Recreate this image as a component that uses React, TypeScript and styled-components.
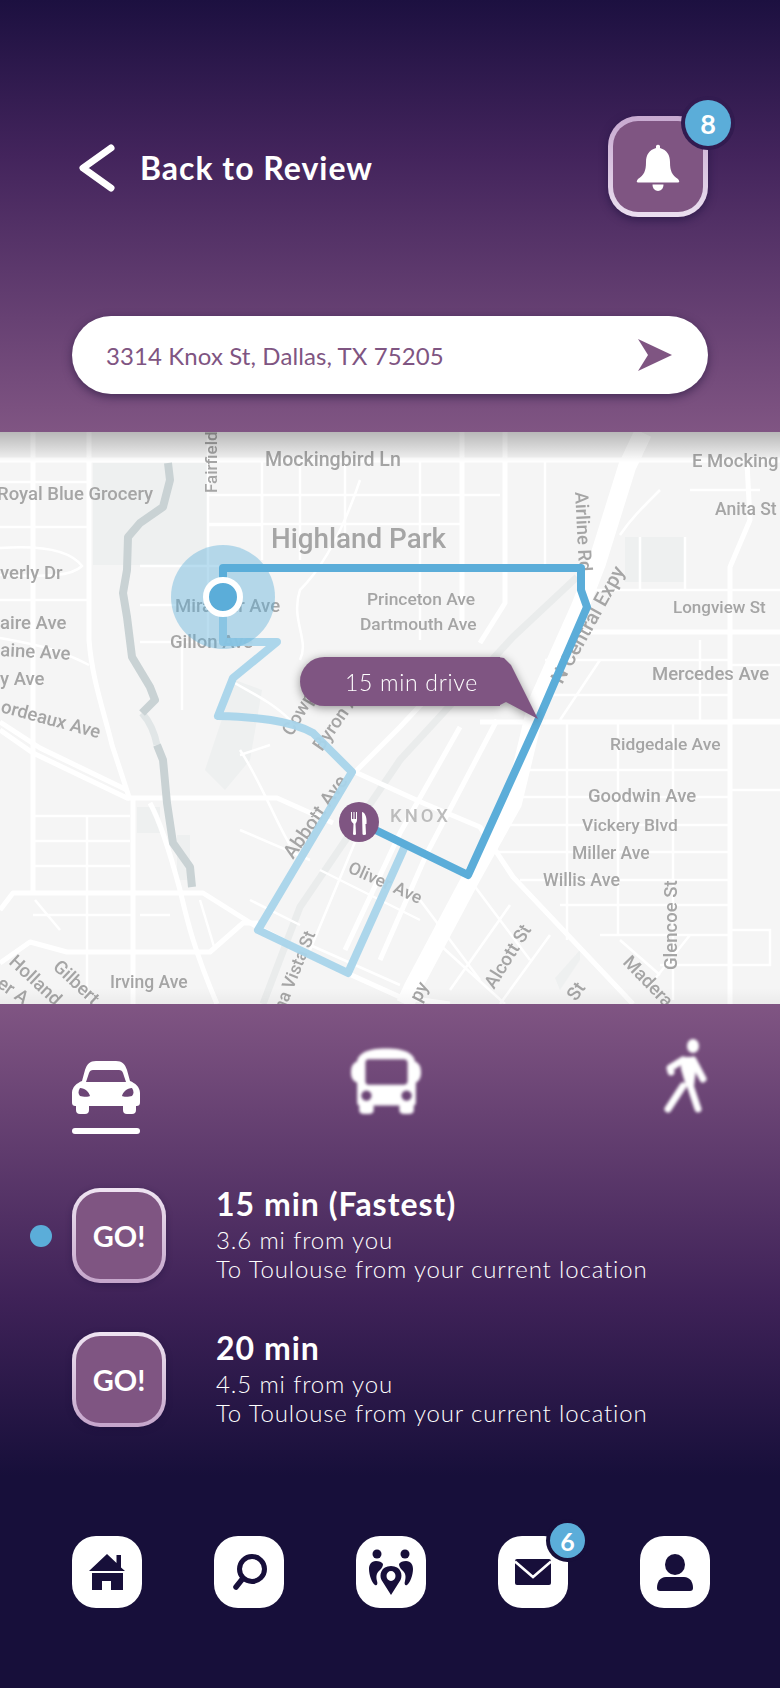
import styled, { createGlobalStyle } from 'styled-components'

const GlobalStyle = createGlobalStyle`
  html, body {
    margin: 0;
    padding: 0;
    background: #170f3a;
  }
  * {
    box-sizing: border-box;
  }
`

const Screen = styled.div`
  width: 780px;
  height: 1688px;
  display: flex;
  flex-direction: column;
  font-family: Lato, 'Open Sans', sans-serif;
  color: #fff;
  overflow: hidden;
`

const Header = styled.header`
  height: 432px;
  padding: 116px 72px 0;
  background: linear-gradient(#1c1040 0%, #43245c 36%, #805583 100%);
`

const TopRow = styled.div`
  display: flex;
  align-items: center;
  justify-content: space-between;
  height: 101px;
`

const BackLink = styled.a`
  display: flex;
  align-items: center;
  gap: 24px;
  padding-left: 6px;
  margin-top: 2px;
  font-size: 32px;
  font-weight: 700;
  letter-spacing: 1px;
`

const BellButton = styled.button`
  position: relative;
  width: 100px;
  height: 101px;
  display: flex;
  align-items: center;
  justify-content: center;
  border: 5px solid transparent;
  border-radius: 30px;
  background: linear-gradient(#7f5582, #7f5582) padding-box,
    linear-gradient(#c7a9d0, #ebdff0) border-box;
  box-shadow: 0 3px 8px rgba(23, 15, 58, 0.55);
`

const Badge = styled.span<{ $size: number; $ring: string; $font: number }>`
  position: absolute;
  width: ${(p) => p.$size}px;
  height: ${(p) => p.$size}px;
  display: flex;
  align-items: center;
  justify-content: center;
  border-radius: 50%;
  background: #5badd9;
  box-shadow: 0 0 0 4px ${(p) => p.$ring};
  color: #fff;
  font-family: Lato, sans-serif;
  font-size: ${(p) => p.$font}px;
  font-weight: 700;
`

const BellBadge = styled(Badge)`
  top: -21px;
  right: -28px;
`

const NavBadge = styled(Badge)`
  top: -13px;
  right: -17px;
`

const SearchBar = styled.div`
  margin-top: 99px;
  height: 78px;
  display: flex;
  align-items: center;
  justify-content: space-between;
  padding: 0 36px 0 34px;
  border-radius: 39px;
  background: #fff;
  color: #7f5582;
  font-size: 24px;
  letter-spacing: 0.1px;
  box-shadow: 0 3px 10px rgba(35, 20, 60, 0.6);
`

const MapFrame = styled.section`
  position: relative;
  height: 572px;
  background: #f5f5f5;
  overflow: hidden;

  &::after {
    content: '';
    position: absolute;
    inset: 0;
    pointer-events: none;
    background: linear-gradient(rgba(0, 0, 0, 0.25), rgba(0, 0, 0, 0) 30px),
      linear-gradient(0deg, rgba(0, 0, 0, 0.04), rgba(0, 0, 0, 0) 16px);
  }
`

const MapSvg = styled.svg`
  display: block;
  width: 780px;
  height: 572px;
`

const Base = styled.g`
  filter: blur(0.5px);
`

const MapLabel = styled.text<{ $size: number; $color: string; $spacing: number }>`
  font-family: Roboto, 'Liberation Sans', sans-serif;
  font-size: ${(p) => p.$size}px;
  font-weight: 500;
  fill: ${(p) => p.$color};
  letter-spacing: ${(p) => p.$spacing}px;
`

const DriveBubble = styled.div`
  position: absolute;
  left: 300px;
  top: 225px;
  width: 200px;
  height: 49px;
  z-index: 1;
  display: flex;
  align-items: center;
  padding-left: 45px;
  border-radius: 25px 0 0 25px;
  background: #7f5582;
  font-size: 23px;
  font-weight: 300;
  letter-spacing: 0.7px;
  white-space: nowrap;
  filter: drop-shadow(0 2px 5px rgba(0, 0, 0, 0.4));

  &::after {
    content: '';
    position: absolute;
    left: 198px;
    top: 0;
    width: 42px;
    height: 63px;
    background: #7f5582;
    clip-path: polygon(0 0, 6px 1px, 13px 8px, 40px 62px, 8px 45px, 0 49px);
  }
`

const Panel = styled.section`
  flex: 1;
  background: linear-gradient(#805583 0%, #3f2258 43%, #170f3a 69%);
`

const Tabs = styled.div`
  display: grid;
  grid-template-columns: 279px 312px 44px;
  padding: 36px 0 0 72px;
`

const Tab = styled.div`
  display: flex;
  flex-direction: column;
  gap: 14px;
`

const TabIcon = styled.div<{ $blurred?: boolean }>`
  height: 74px;
  display: flex;
  align-items: flex-end;
  filter: ${(p) => (p.$blurred ? 'blur(1.7px)' : 'none')};
`

const TabLine = styled.div`
  width: 68px;
  height: 6px;
  border-radius: 3px;
  background: #fff;
`

const RouteList = styled.div`
  display: flex;
  flex-direction: column;
  gap: 49px;
  margin-top: 54px;
  padding-left: 30px;
`

const Route = styled.div`
  display: grid;
  grid-template-columns: 22px 94px 1fr;
  column-gap: 20px;
  align-items: center;
  height: 95px;

  & > :nth-child(3) {
    margin-left: 30px;
  }
`

const Dot = styled.span<{ $on: boolean }>`
  width: 22px;
  height: 22px;
  border-radius: 50%;
  background: ${(p) => (p.$on ? '#5badd9' : 'transparent')};
`

const GoButton = styled.button`
  width: 94px;
  height: 95px;
  padding: 0;
  border: 4px solid transparent;
  border-radius: 28px;
  background: linear-gradient(#7f5582, #7f5582) padding-box,
    linear-gradient(#efe4f2, #c5a5cb) border-box;
  color: #fff;
  font-family: Lato, sans-serif;
  font-size: 29px;
  font-weight: 700;
  box-shadow: 0 2px 6px rgba(23, 15, 58, 0.35);
`

const RouteText = styled.div`
  align-self: start;
`

const RouteTitle = styled.div`
  font-size: 32px;
  line-height: 32px;
  font-weight: 700;
  letter-spacing: 1px;
  margin-bottom: 5px;
`

const RouteLine = styled.div`
  font-size: 24px;
  line-height: 29px;
  font-weight: 300;
  letter-spacing: 0.86px;
`

const BottomNav = styled.nav`
  display: flex;
  gap: 72px;
  margin-top: 109px;
  padding-left: 72px;
`

const NavButton = styled.button`
  position: relative;
  width: 70px;
  height: 72px;
  padding: 0;
  display: flex;
  align-items: center;
  justify-content: center;
  border: none;
  border-radius: 24px;
  background: #fff;
`

const NAVY = '#170f3a'

const ROADS_THICK = [
  'M0 460H780',
  'M89 432V640C92 680 105 715 112 745L130 800',
  'M33 432V893',
  'M0 730L33 753L127 798H277L333 823',
  'M0 722L40 748L127 790',
  'M133 798V1004',
  'M150 803C162 825 172 860 180 890C186 915 192 945 217 1004',
  'M0 910L13 893H203L257 927L347 973L400 997L450 1004',
  'M0 963L30 942L67 952H210L243 923H258',
  'M355 772L400 727L430 695L470 665',
  'M355 772L423 803L480 827L513 877L633 1004',
  'M505 432V603L480 643',
  'M462 432V625',
  'M747 463L750 520L730 567V1004',
  'M580 632H780',
  'M480 722H780',
  'M460 727L400 833L345 950',
  'M497 720L427 853L380 960',
]

const ROADS_THIN = [
  'M0 482H89M0 527H89M0 548C40 545 70 550 82 566C70 578 40 576 0 575',
  'M0 600H89M0 638C40 645 60 650 89 665',
  'M208 432V640M208 495H500M208 524H460M140 566H520',
  'M140 605H240M140 642H220M182 642V710',
  'M262 460V560M300 460V560M345 460V540M420 460V640M545 460V570',
  'M262 495V520M208 525H262M360 480C350 510 330 560 300 590C290 620 310 640 300 660',
  'M660 490C640 510 630 520 620 535M690 490H760',
  'M33 816H130M33 841H130M33 866H130M87 816V893',
  'M33 915H133M87 893V1000M140 915H170M133 952V1004',
  'M567 722V940M618 722V935M673 722V1000M700 640V722',
  'M545 660H730M550 695H730M520 770H730M510 797H730M500 825H730M490 852H730M520 880H730M560 905H730',
  'M600 935H730M660 965H730M620 940L660 975M690 935L650 985',
  'M730 665H780M730 720H780M730 790H780M730 930H770V965H730',
  'M420 900L480 980M470 880L530 960M440 945L505 1004M510 905L450 990M550 935L500 1004',
  'M590 590H780M640 537V590M685 537V590M600 660L560 720',
  'M240 750C260 780 275 820 290 845M240 830L310 860M250 900L300 925M320 870L420 920',
  'M360 830L310 950M400 860L350 975M310 945L400 985',
  'M230 680C245 690 270 700 290 720M240 755L270 745',
  'M60 930L35 900M200 900L215 950',
]

const RIVER = [
  'M168 463L170 480L163 507L140 523L128 537L127 570L123 593L127 617L132 657L150 687L155 700L142 713',
  'M157 745L163 760L167 803L173 843L190 867L192 887',
]

type LabelDef = [string, number, number, number?, number?, string?, number?]

const LABELS: LabelDef[] = [
  ['Mockingbird Ln', 265, 466, 0, 19.6],
  ['E Mocking', 692, 467],
  ['Fairfield', 217, 493, -90, 17],
  ['Royal Blue Grocery', -3, 500],
  ['Highland Park', 271, 548, 0, 27.8],
  ['Anita St', 715, 515, 0, 17.5],
  ['Airline Rd', 575, 492, 87],
  ['N Central Expy', 562, 685, -61, 20],
  ['verly Dr', 0, 579],
  ['Miramar Ave', 175, 612],
  ['Gillon Ave', 170, 648],
  ['aire Ave', 0, 629],
  ['aine Ave', 0, 656, 3],
  ['y Ave', 0, 685],
  ['ordeaux Ave', 0, 712, 15],
  ['Princeton Ave', 367, 605, 0, 17.4],
  ['Dartmouth Ave', 360, 630, 0, 17.4],
  ['Longview St', 673, 613, 0, 17],
  ['Mercedes Ave', 652, 680],
  ['Ridgedale Ave', 610, 750, 0, 17.4],
  ['Goodwin Ave', 588, 802],
  ['Vickery Blvd', 582, 831, 0, 17.4],
  ['Miller Ave', 572, 859, 0, 17.5],
  ['Willis Ave', 543, 886, 0, 17.8],
  ['KNOX', 390, 822, 0, 18.5, '#bcbcbc', 3],
  ['Glencoe St', 677, 970, -90],
  ['Alcott St', 494, 990, -58],
  ['St', 576, 1002, -55],
  ['Madera', 622, 963, 46],
  ['py', 420, 1003, -62],
  ['Cowp', 292, 737, -60],
  ['Byron A', 322, 752, -55],
  ['Abbott Ave', 293, 860, -55, 19.5],
  ['Oliver Ave', 347, 872, 24, 17.5],
  ['na Vista St', 284, 1012, -68, 17.5],
  ['Irving Ave', 110, 988, 0, 17.5],
  ['Holland', 8, 963, 43],
  ['Gilbert', 52, 968, 43],
  ['er A', -4, 986, 35],
]

const ChevronIcon = () => (
  <svg width="38" height="48" viewBox="0 0 38 48">
    <path d="M33 4L5 24L33 44" fill="none" stroke="#fff" strokeWidth="7" strokeLinecap="round" strokeLinejoin="round" />
  </svg>
)

const BellIcon = () => (
  <svg width="44" height="48" viewBox="0 0 44 48">
    <path
      fill="#fff"
      d="M20 3a2.2 2.2 0 0 1 4 0V5C31 7 34 12 34 19C34 28 36 32 42 36Q45 40 41 39.500H3Q-1 40 2 36C8 32 10 28 10 19C10 12 13 7 20 5Z"
    />
    <path fill="#fff" d="M16.500 41.500H27.500C27.500 50 16.500 50 16.500 41.500Z" />
  </svg>
)

const SendIcon = () => (
  <svg width="34" height="32" viewBox="0 0 34 32">
    <path fill="#7f5582" d="M0 0L34 16L0 32L10 16Z" />
  </svg>
)

const CarIcon = () => (
  <svg width="68" height="53" viewBox="0 0 68 53">
    <path
      fill="#fff"
      fillRule="evenodd"
      d="M24 0H44C50 0 53 3 55 9L58 20C63 22 68 26 68 32V41C68 44 67 45 64 45V49Q64 53 60 53H55Q51 53 51 49V45H17V49Q17 53 13 53H8Q4 53 4 49V45C1 45 0 44 0 41V32C0 26 5 22 10 20L13 9C15 3 18 0 24 0ZM21 9Q18 9 17 12L14 21H54L51 12Q50 9 47 9ZM8 27C6 30 6 33 8 35C11 36 17 36 18 35C17 31 13 27 8 27ZM60 27C55 27 51 31 50 35C51 36 57 36 60 35C62 33 62 30 60 27Z"
    />
  </svg>
)

const BusIcon = () => (
  <svg width="70" height="67" viewBox="0 0 68 71" preserveAspectRatio="none">
    <path
      fill="#fff"
      fillRule="evenodd"
      d="M12 6C20 0 48 0 56 6C60 9 62 12 62 15C66 17 68 20 68 27C68 33 66 36 63 38V58Q63 62 61 62V67Q61 71 56 71H52Q47 71 47 67V62H22V67Q22 71 17 71H13Q8 71 8 67V62Q6 62 6 58V38C2 36 0 33 0 27C0 20 2 17 6 15C6 12 8 9 12 6ZM17 13Q14 13 14 17V36Q14 40 17 40H51Q55 40 55 36V17Q55 13 51 13ZM15 46A5 5.500 0 1 0 15 57A5 5.500 0 1 0 15 46ZM54 46A5 5.500 0 1 0 54 57A5 5.500 0 1 0 54 46Z"
    />
  </svg>
)

const WalkIcon = () => (
  <svg width="44" height="75" viewBox="0 0 44 75">
    <ellipse cx="30" cy="7" rx="6" ry="7" fill="#fff" />
    <path fill="#fff" d="M18 18H30L33 30L31 47H23L18 30Z" />
    <path
      d="M20 21L7 29L8 33M30 21L40 40M27 46L35 70M20 47L5 70"
      fill="none"
      stroke="#fff"
      strokeWidth="7"
      strokeLinecap="round"
      strokeLinejoin="round"
    />
  </svg>
)

const HomeIcon = () => (
  <svg width="36" height="36" viewBox="0 0 36 36">
    <path fill={NAVY} d="M18 0L27.500 9V1H32V13.500L36 17H0Z" />
    <path fill={NAVY} fillRule="evenodd" d="M3 19H34V36H22V27H13V36H3Z" />
  </svg>
)

const SearchIcon = () => (
  <svg width="36" height="37" viewBox="0 0 36 37">
    <circle cx="21" cy="15" r="12.500" fill="none" stroke={NAVY} strokeWidth="5" />
    <path d="M5 33L11 25.500" stroke={NAVY} strokeWidth="5.500" strokeLinecap="round" />
  </svg>
)

const GroupIcon = () => (
  <svg width="44" height="46" viewBox="0 0 44 46">
    <circle cx="8" cy="5" r="4.500" fill={NAVY} />
    <circle cx="36" cy="5" r="4.500" fill={NAVY} />
    <path fill={NAVY} d="M7 12C2 12 0 16 0 20C0 26 3 34 6 36C8 37 9 35 8 32C7 28 7 24 11 21C13 19 14 17 14 15C13 13 10 12 7 12Z" />
    <path fill={NAVY} d="M37 12C42 12 44 16 44 20C44 26 41 34 38 36C36 37 35 35 36 32C37 28 37 24 33 21C31 19 30 17 30 15C31 13 34 12 37 12Z" />
    <path
      fill={NAVY}
      fillRule="evenodd"
      d="M22 46L12.500 31C10 26 12 17 22 17C32 17 34 26 31.500 31ZM22 22A4.500 5 0 1 0 22 32A4.500 5 0 1 0 22 22Z"
    />
  </svg>
)

const MailIcon = () => (
  <svg width="36" height="26" viewBox="0 0 36 26">
    <rect width="36" height="26" rx="2" fill={NAVY} />
    <path d="M0 2.500L18 18L36 2.500" fill="none" stroke="#fff" strokeWidth="2.500" />
  </svg>
)

const UserIcon = () => (
  <svg width="36" height="37" viewBox="0 0 36 37">
    <ellipse cx="18" cy="10.500" rx="10" ry="10.500" fill={NAVY} />
    <path fill={NAVY} d="M9 23H27C33 23 36 28 36 34Q36 37 33 37H3Q0 37 0 34C0 28 3 23 9 23Z" />
  </svg>
)

const MapArt = () => (
  <MapSvg viewBox="0 432 780 572">
    <Base>
      <g fill="#eef0f0">
        <rect x="93" y="463" width="115" height="102" />
        <rect x="625" y="537" width="60" height="45" />
        <rect x="137" y="807" width="23" height="26" />
        <rect x="177" y="835" width="13" height="45" />
        <path d="M555 978L580 950L580 960L560 990Z" />
        <path d="M235 680L262 690L250 760L225 790L205 770Z" />
      </g>
      <path d="M577 577L513 637L400 760L300 907L263 1004" fill="none" stroke="#eaecec" strokeWidth="7" />
      <g fill="none" stroke="#fff" strokeWidth="2.500">
        {ROADS_THIN.map((d) => (
          <path key={d} d={d} />
        ))}
      </g>
      <g fill="none" stroke="#fff" strokeWidth="5" strokeLinejoin="round">
        {ROADS_THICK.map((d) => (
          <path key={d} d={d} />
        ))}
      </g>
      <path
        d="M643 433L627 467L597 563L580 607L537 703L513 803L470 880L413 987L405 1004"
        fill="none"
        stroke="#fff"
        strokeWidth="18"
      />
      <path d="M142 713C150 722 155 735 157 745" fill="none" stroke="#e1e6e7" strokeWidth="7" />
      <g fill="none" stroke="#c9d2d4" strokeWidth="8" strokeLinejoin="round">
        {RIVER.map((d) => (
          <path key={d} d={d} />
        ))}
      </g>
      {LABELS.map(([text, x, y, rot = 0, size = 18.5, color = '#a5a5a5', spacing = 0]) => (
        <MapLabel
          key={text + x}
          x={x}
          y={y}
          $size={size}
          $color={color}
          $spacing={spacing}
          transform={rot ? `rotate(${rot} ${x} ${y})` : undefined}
        >
          {text}
        </MapLabel>
      ))}
    </Base>
    <path
      d="M223 597V642H277L233 678L218 716C255 717 290 720 313 733L352 772L258 930L348 973L405 846"
      fill="none"
      stroke="#a8d4ea"
      strokeWidth="8"
      strokeLinejoin="round"
      opacity="0.95"
    />
    <path
      d="M359 822L468 875L537 723L587 607L581 590V568H223V597"
      fill="none"
      stroke="#5badd9"
      strokeWidth="8"
      strokeLinejoin="round"
    />
    <circle cx="223" cy="597" r="52" fill="#5badd9" opacity="0.42" />
    <circle cx="223" cy="597" r="17" fill="#5badd9" stroke="#fff" strokeWidth="6" />
    <circle cx="359" cy="822" r="20" fill="#7f5582" />
    <path
      fill="#fff"
      d="M352 812V819H353.500V812H354.500V819H356V812H357V820C357 822 355.500 823 355.500 824L356 834Q356 835 354.500 835Q353 835 353 834L353.500 824C353.500 823 351 822 351 820V812ZM362 812C366 813 367 819 366.500 824H365.500L366 834Q366 835 364 835Q362.500 835 362.500 834Z"
    />
  </MapSvg>
)

const ROUTES = [
  { title: '15 min (Fastest)', dist: '3.6 mi from you', active: true },
  { title: '20 min', dist: '4.5 mi from you', active: false },
]

const App = () => {
  return (
    <Screen>
      <GlobalStyle />
      <Header>
        <TopRow>
          <BackLink>
            <ChevronIcon />
            Back to Review
          </BackLink>
          <BellButton>
            <BellIcon />
            <BellBadge $size={46} $ring="#321b50" $font={27}>
              8
            </BellBadge>
          </BellButton>
        </TopRow>
        <SearchBar>
          3314 Knox St, Dallas, TX 75205
          <SendIcon />
        </SearchBar>
      </Header>

      <MapFrame>
        <MapArt />
        <DriveBubble>15 min drive</DriveBubble>
      </MapFrame>

      <Panel>
        <Tabs>
          <Tab>
            <TabIcon>
              <CarIcon />
            </TabIcon>
            <TabLine />
          </Tab>
          <Tab>
            <TabIcon $blurred>
              <BusIcon />
            </TabIcon>
          </Tab>
          <Tab>
            <TabIcon $blurred>
              <WalkIcon />
            </TabIcon>
          </Tab>
        </Tabs>

        <RouteList>
          {ROUTES.map((r) => (
            <Route key={r.title}>
              <Dot $on={r.active} />
              <GoButton>GO!</GoButton>
              <RouteText>
                <RouteTitle>{r.title}</RouteTitle>
                <RouteLine>{r.dist}</RouteLine>
                <RouteLine>To Toulouse from your current location</RouteLine>
              </RouteText>
            </Route>
          ))}
        </RouteList>

        <BottomNav>
          <NavButton>
            <HomeIcon />
          </NavButton>
          <NavButton>
            <SearchIcon />
          </NavButton>
          <NavButton>
            <GroupIcon />
          </NavButton>
          <NavButton>
            <MailIcon />
            <NavBadge $size={35} $ring={NAVY} $font={25}>
              6
            </NavBadge>
          </NavButton>
          <NavButton>
            <UserIcon />
          </NavButton>
        </BottomNav>
      </Panel>
    </Screen>
  )
}

export default App
